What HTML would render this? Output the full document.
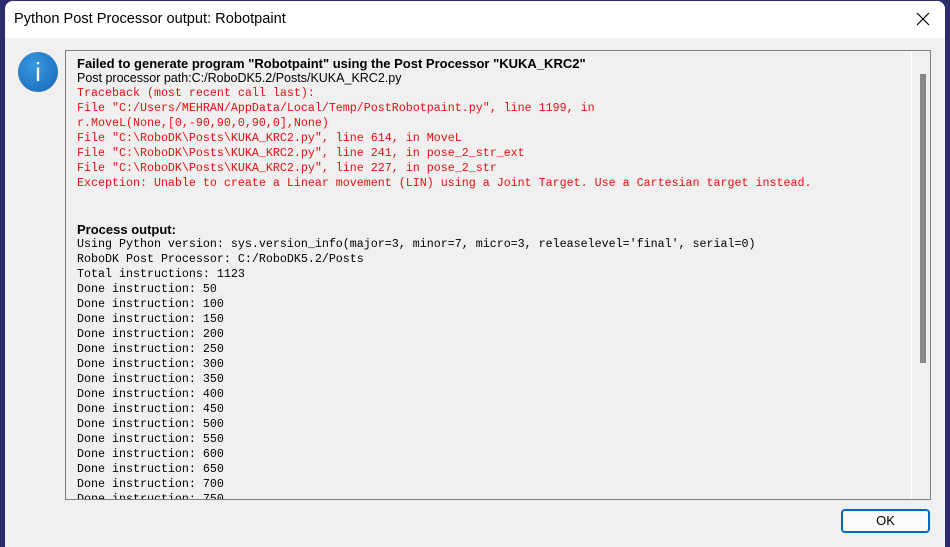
<!DOCTYPE html>
<html><head><style>
body{margin:0;width:950px;height:547px;background:#2a2d6a;overflow:hidden;position:relative}
.win{position:absolute;left:5px;top:1px;width:940px;height:546px;background:#f0f0f0;border-radius:8px 8px 0 0;overflow:hidden}
.title{position:absolute;left:0;top:0;width:940px;height:37px;background:#fff;font:14.6px "Liberation Sans",sans-serif;color:#000}
.title span{position:absolute;left:9px;top:10px}
.close{position:absolute;left:911px;top:11px}
.icon{position:absolute;left:13px;top:51px;width:40px;height:40px;border-radius:50%;background:radial-gradient(circle at 40% 35%,#3a98e0,#1565b5);color:#fff;font:300 26px "Liberation Sans",sans-serif;text-align:center;line-height:40px}
.box{position:absolute;left:60px;top:49px;width:866px;height:450px;border:1px solid #7a7f88;box-sizing:border-box;overflow:hidden}
.sb{position:absolute;left:845px;top:0;width:19px;height:448px;border-left:1px solid #fff;background:#f0f0f0}
.thumb{position:absolute;left:8px;top:23px;width:6px;height:289px;background:#878787}
.txt{position:absolute;left:11px;top:5px}
.l{white-space:pre;height:15px;font:11.67px/15px "Liberation Mono",monospace;color:#000}
.s{font:12.5px/15px "Liberation Sans",sans-serif}
.b{font:bold 13px/15px "Liberation Sans",sans-serif}
.r{color:#e81010}
.ok{position:absolute;left:836px;top:508px;width:89px;height:24px;border:1px solid #0067c0;border-radius:4px;background:#fbfbfb;font:13px "Liberation Sans",sans-serif;text-align:center;line-height:22px;box-sizing:border-box;box-shadow:inset 0 0 0 1px #0067c0}
</style></head><body>
<div class="win">
<div class="title"><span>Python Post Processor output: Robotpaint</span>
<svg class="close" width="14" height="14"><path d="M1 1L13 13M13 1L1 13" stroke="#000" stroke-width="1.2"/></svg></div>
<div class="icon">i</div>
<div class="box">
<div class="txt">
<div class="l b">Failed to generate program "Robotpaint" using the Post Processor "KUKA_KRC2"</div>
<div class="l s">Post processor path:C:/RoboDK5.2/Posts/KUKA_KRC2.py</div>
<div class="l r">Traceback (most recent call last):</div>
<div class="l r">File "C:/Users/MEHRAN/AppData/Local/Temp/PostRobotpaint.py", line 1199, in</div>
<div class="l r">r.MoveL(None,[0,-90,90,0,90,0],None)</div>
<div class="l r">File "C:\RoboDK\Posts\KUKA_KRC2.py", line 614, in MoveL</div>
<div class="l r">File "C:\RoboDK\Posts\KUKA_KRC2.py", line 241, in pose_2_str_ext</div>
<div class="l r">File "C:\RoboDK\Posts\KUKA_KRC2.py", line 227, in pose_2_str</div>
<div class="l r">Exception: Unable to create a Linear movement (LIN) using a Joint Target. Use a Cartesian target instead.</div>
<div class="l"></div><div class="l"></div>
<div class="l b" style="margin-top:1px">Process output:</div>
<div class="l">Using Python version: sys.version_info(major=3, minor=7, micro=3, releaselevel='final', serial=0)</div>
<div class="l">RoboDK Post Processor: C:/RoboDK5.2/Posts</div>
<div class="l">Total instructions: 1123</div>
<div class="l">Done instruction: 50</div>
<div class="l">Done instruction: 100</div>
<div class="l">Done instruction: 150</div>
<div class="l">Done instruction: 200</div>
<div class="l">Done instruction: 250</div>
<div class="l">Done instruction: 300</div>
<div class="l">Done instruction: 350</div>
<div class="l">Done instruction: 400</div>
<div class="l">Done instruction: 450</div>
<div class="l">Done instruction: 500</div>
<div class="l">Done instruction: 550</div>
<div class="l">Done instruction: 600</div>
<div class="l">Done instruction: 650</div>
<div class="l">Done instruction: 700</div>
<div class="l">Done instruction: 750</div>
</div>
<div class="sb"><div class="thumb"></div></div>
</div>
<div class="ok">OK</div>
</div>
</body></html>
